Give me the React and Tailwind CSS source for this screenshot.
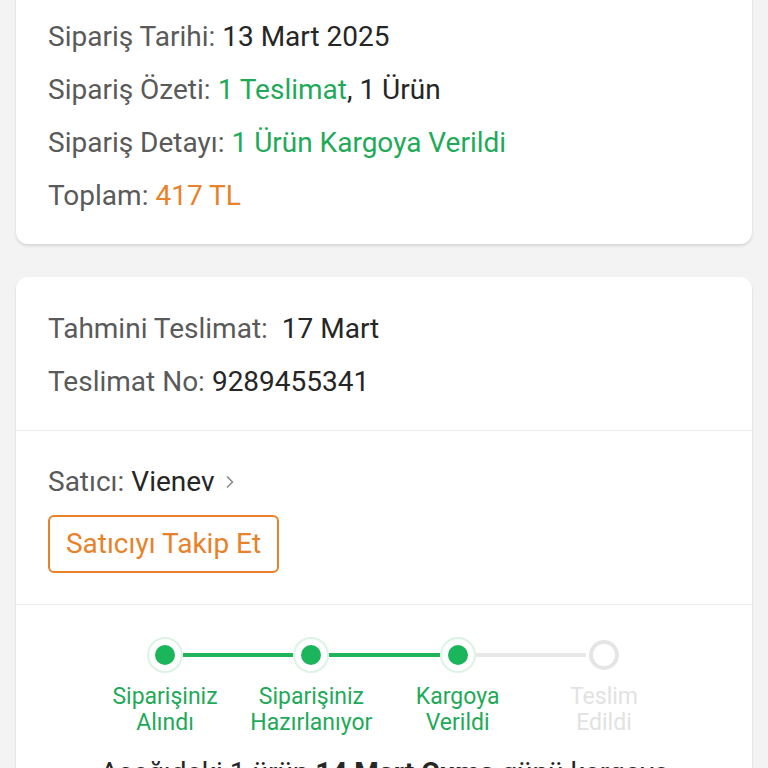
import { ChevronRight } from 'lucide-react'

const summary = [
  { label: 'Sipariş Tarihi:', value: <span className="text-[#262626]">13 Mart 2025</span> },
  {
    label: 'Sipariş Özeti:',
    value: (
      <span className="text-[#262626]">
        <span className="text-[#1faa59]">1 Teslimat</span>, 1 Ürün
      </span>
    ),
  },
  { label: 'Sipariş Detayı:', value: <span className="text-[#1faa59]">1 Ürün Kargoya Verildi</span> },
  { label: 'Toplam:', value: <span className="text-[#e8822a]">417 TL</span> },
]

const steps = [
  { title: 'Siparişiniz', sub: 'Alındı', done: true },
  { title: 'Siparişiniz', sub: 'Hazırlanıyor', done: true },
  { title: 'Kargoya', sub: 'Verildi', done: true },
  { title: 'Teslim', sub: 'Edildi', done: false },
]

function Dot({ done }) {
  if (!done) {
    return <div className="w-[30px] h-[30px] rounded-full border-[4px] border-[#e5e5e5] bg-white" />
  }
  return (
    <div className="w-[36px] h-[36px] rounded-full border-2 border-[#dcf3e5] bg-white flex items-center justify-center">
      <div className="w-[20px] h-[20px] rounded-full bg-[#1bb55c]" />
    </div>
  )
}

export default function App() {
  return (
    <div
      className="h-[768px] overflow-hidden bg-[#f3f3f3] px-4 text-[28px] leading-none"
      style={{ fontFamily: 'Roboto, "Noto Sans", sans-serif' }}
    >
      <div className="-mt-[20px] bg-white rounded-[12px] shadow-[0_2px_3px_rgba(0,0,0,0.12)] px-8 pt-[42px] pb-[33px] flex flex-col gap-[23px]">
        {summary.map((row) => (
          <div key={row.label} className="h-[30px] flex items-center gap-[7px] text-[#5a5a5a]">
            <span>{row.label}</span>
            {row.value}
          </div>
        ))}
      </div>

      <div className="mt-[33px] bg-white rounded-[12px] shadow-[0_2px_3px_rgba(0,0,0,0.12)]">
        <div className="px-8 pt-[37px] pb-[33px] flex flex-col gap-[23px] border-b border-[#ececec]">
          <div className="h-[30px] flex items-center gap-[14px] text-[#5a5a5a]">
            <span>Tahmini Teslimat:</span>
            <span className="text-[#262626]">17 Mart</span>
          </div>
          <div className="h-[30px] flex items-center gap-[7px] text-[#5a5a5a]">
            <span>Teslimat No:</span>
            <span className="text-[#262626]">9289455341</span>
          </div>
        </div>

        <div className="px-8 pt-[36px] pb-[31px] border-b border-[#ececec]">
          <div className="h-[30px] flex items-center gap-[7px] text-[#5a5a5a]">
            <span>Satıcı:</span>
            <span className="text-[#262626]">Vienev</span>
            <ChevronRight size={20} strokeWidth={2} className="text-[#8a8a8a] -ml-[2px]" />
          </div>
          <button className="mt-[18px] w-[231px] h-[58px] rounded-[6px] border-2 border-[#e8822a] text-[#e8822a] flex items-center justify-center">
            Satıcıyı Takip Et
          </button>
        </div>

        <div className="pt-[32px] pl-[131px] pr-[130px]">
          <div className="flex items-start justify-between">
            {steps.map((s, i) => (
              <div key={i} className="flex items-center flex-1 last:flex-none">
                <div className="relative flex flex-col items-center w-[36px]">
                  <div className="h-[36px] flex items-center justify-center">
                    <Dot done={s.done} />
                  </div>
                  <div
                    className={`absolute top-[47px] whitespace-nowrap text-center text-[23px] leading-[26px] ${
                      s.done ? 'text-[#1faa59]' : 'text-[#e2e2e2]'
                    }`}
                  >
                    <div>{s.title}</div>
                    <div>{s.sub}</div>
                  </div>
                </div>
                {i < steps.length - 1 && (
                  <div
                    className={`flex-1 h-[4px] ${
                      steps[i + 1].done ? 'bg-[#1fb35a]' : 'bg-[#e8e8e8]'
                    }`}
                  />
                )}
              </div>
            ))}
          </div>
          <div className="mt-[86px] -ml-[120px] -mr-[120px] text-center text-[#262626] text-[28px] whitespace-nowrap">
            Aşağıdaki 1 ürün <b className="font-bold">14 Mart Cuma</b> günü kargoya
          </div>
        </div>
      </div>
    </div>
  )
}
